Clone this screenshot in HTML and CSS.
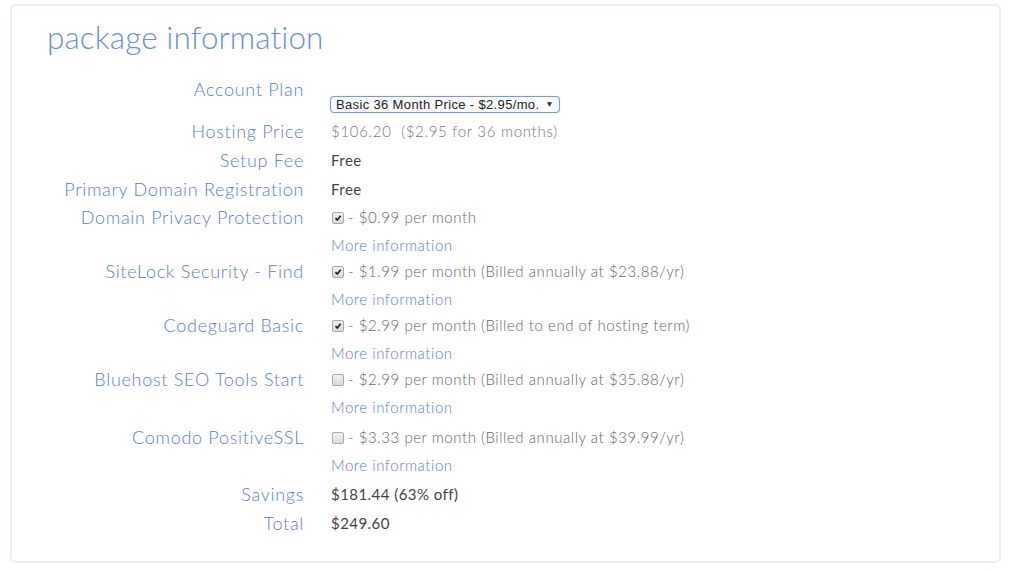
FILE: index.html
```html
<!DOCTYPE html>
<html>
<head>
<meta charset="utf-8">
<link rel="stylesheet" href="styles.css">
</head>
<body>
<div class="card">
  <h1 class="title">package information</h1>
  <div class="form">
    <div class="label plan-label">Account Plan</div>
    <div class="value plan-value">
      <div class="select">
        <span class="select-text">Basic 36 Month Price - $2.95/mo.</span>
        <span class="select-arrow">▼</span>
      </div>
    </div>

    <div class="label">Hosting Price</div>
    <div class="value light">$106.20&nbsp; ($2.95 for 36 months)</div>

    <div class="label">Setup Fee</div>
    <div class="value dark">Free</div>

    <div class="label">Primary Domain Registration</div>
    <div class="value dark">Free</div>

    <div class="label check-label">Domain Privacy Protection</div>
    <div class="value">
      <div class="check-line"><span class="box checked"><svg viewBox="0 0 12 12"><path d="M3 6.2 L5.2 8.4 L9.2 3.4" /></svg></span> - $0.99 per month</div>
      <div class="more">More information</div>
    </div>

    <div class="label check-label">SiteLock Security - Find</div>
    <div class="value">
      <div class="check-line"><span class="box checked"><svg viewBox="0 0 12 12"><path d="M3 6.2 L5.2 8.4 L9.2 3.4" /></svg></span> - $1.99 per month (Billed annually at $23.88/yr)</div>
      <div class="more">More information</div>
    </div>

    <div class="label check-label">Codeguard Basic</div>
    <div class="value">
      <div class="check-line"><span class="box checked"><svg viewBox="0 0 12 12"><path d="M3 6.2 L5.2 8.4 L9.2 3.4" /></svg></span> - $2.99 per month (Billed to end of hosting term)</div>
      <div class="more">More information</div>
    </div>

    <div class="label check-label">Bluehost SEO Tools Start</div>
    <div class="value">
      <div class="check-line"><span class="box"></span> - $2.99 per month (Billed annually at $35.88/yr)</div>
      <div class="more">More information</div>
    </div>

    <div class="label check-label spaced">Comodo PositiveSSL</div>
    <div class="value spaced">
      <div class="check-line"><span class="box"></span> - $3.33 per month (Billed annually at $39.99/yr)</div>
      <div class="more">More information</div>
    </div>

    <div class="label savings">Savings</div>
    <div class="value dark savings">$181.44 (63% off)</div>

    <div class="label">Total</div>
    <div class="value dark">$249.60</div>
  </div>
</div>
</body>
</html>
```

FILE: styles.css
```css
html, body {
  margin: 0;
  padding: 0;
  background: #ffffff;
}

body {
  padding: 4px 8px 0 10px;
  font-family: Lato, "Open Sans", sans-serif;
}

.card {
  box-sizing: border-box;
  height: 559px;
  border: 2px solid #e8f0fb;
  border-radius: 6px;
  padding-top: 11px;
}

.title {
  margin: 0 0 0 35px;
  font-size: 31.5px;
  line-height: 40px;
  font-weight: 300;
  color: #6b8fda;
  letter-spacing: 0.1px;
}

.form {
  margin-top: 18px;
  display: grid;
  grid-template-columns: 292px 1fr;
  column-gap: 27px;
}

.label {
  text-align: right;
  font-size: 18px;
  line-height: 29px;
  font-weight: 300;
  letter-spacing: 0.7px;
  color: #5a80cc;
}

.value {
  font-size: 15px;
  line-height: 29px;
  color: #666;
  letter-spacing: 0.5px;
}

.value.light {
  color: #777;
  font-weight: 300;
  letter-spacing: 0.7px;
}

.value.dark {
  color: #444;
  letter-spacing: 0.45px;
}

.savings {
  margin-top: 2px;
}

.spaced {
  margin-top: 4px;
}

.plan-label,
.plan-value {
  height: 42px;
}

.plan-value {
  padding-top: 21px;
  box-sizing: border-box;
}

.select {
  box-sizing: border-box;
  width: 230px;
  height: 17px;
  border: 1px solid #7b9bd6;
  border-radius: 4px;
  box-shadow: 0 0 1px #9fb7e4;
  background: #fbfbfb;
  display: flex;
  align-items: center;
  justify-content: space-between;
  padding: 0 5px 0 5px;
  font-family: "Liberation Sans", Arial, sans-serif;
  font-size: 13px;
  line-height: 15px;
  letter-spacing: 0.35px;
  color: #222;
  margin-left: -1px;
}

.select-arrow {
  font-size: 8.5px;
  color: #333;
}

.check-label {
  line-height: 27px;
}

.check-line {
  line-height: 27px;
  display: flex;
  align-items: center;
  gap: 4px;
  color: #666;
  font-weight: 300;
  letter-spacing: 0.55px;
}

.box {
  box-sizing: border-box;
  width: 12px;
  height: 12px;
  margin-left: 1px;
  border: 1px solid #a9a9a9;
  border-radius: 2px;
  background: linear-gradient(#f2f2f2, #d9d9d9);
  display: inline-flex;
  align-items: center;
  justify-content: center;
}

.box svg {
  width: 10px;
  height: 10px;
}

.box svg path {
  fill: none;
  stroke: #222;
  stroke-width: 2;
}

.more {
  margin-top: 2px;
  line-height: 25px;
  font-size: 15px;
  font-weight: 300;
  letter-spacing: 0.55px;
  color: #5b7fd0;
}
```
